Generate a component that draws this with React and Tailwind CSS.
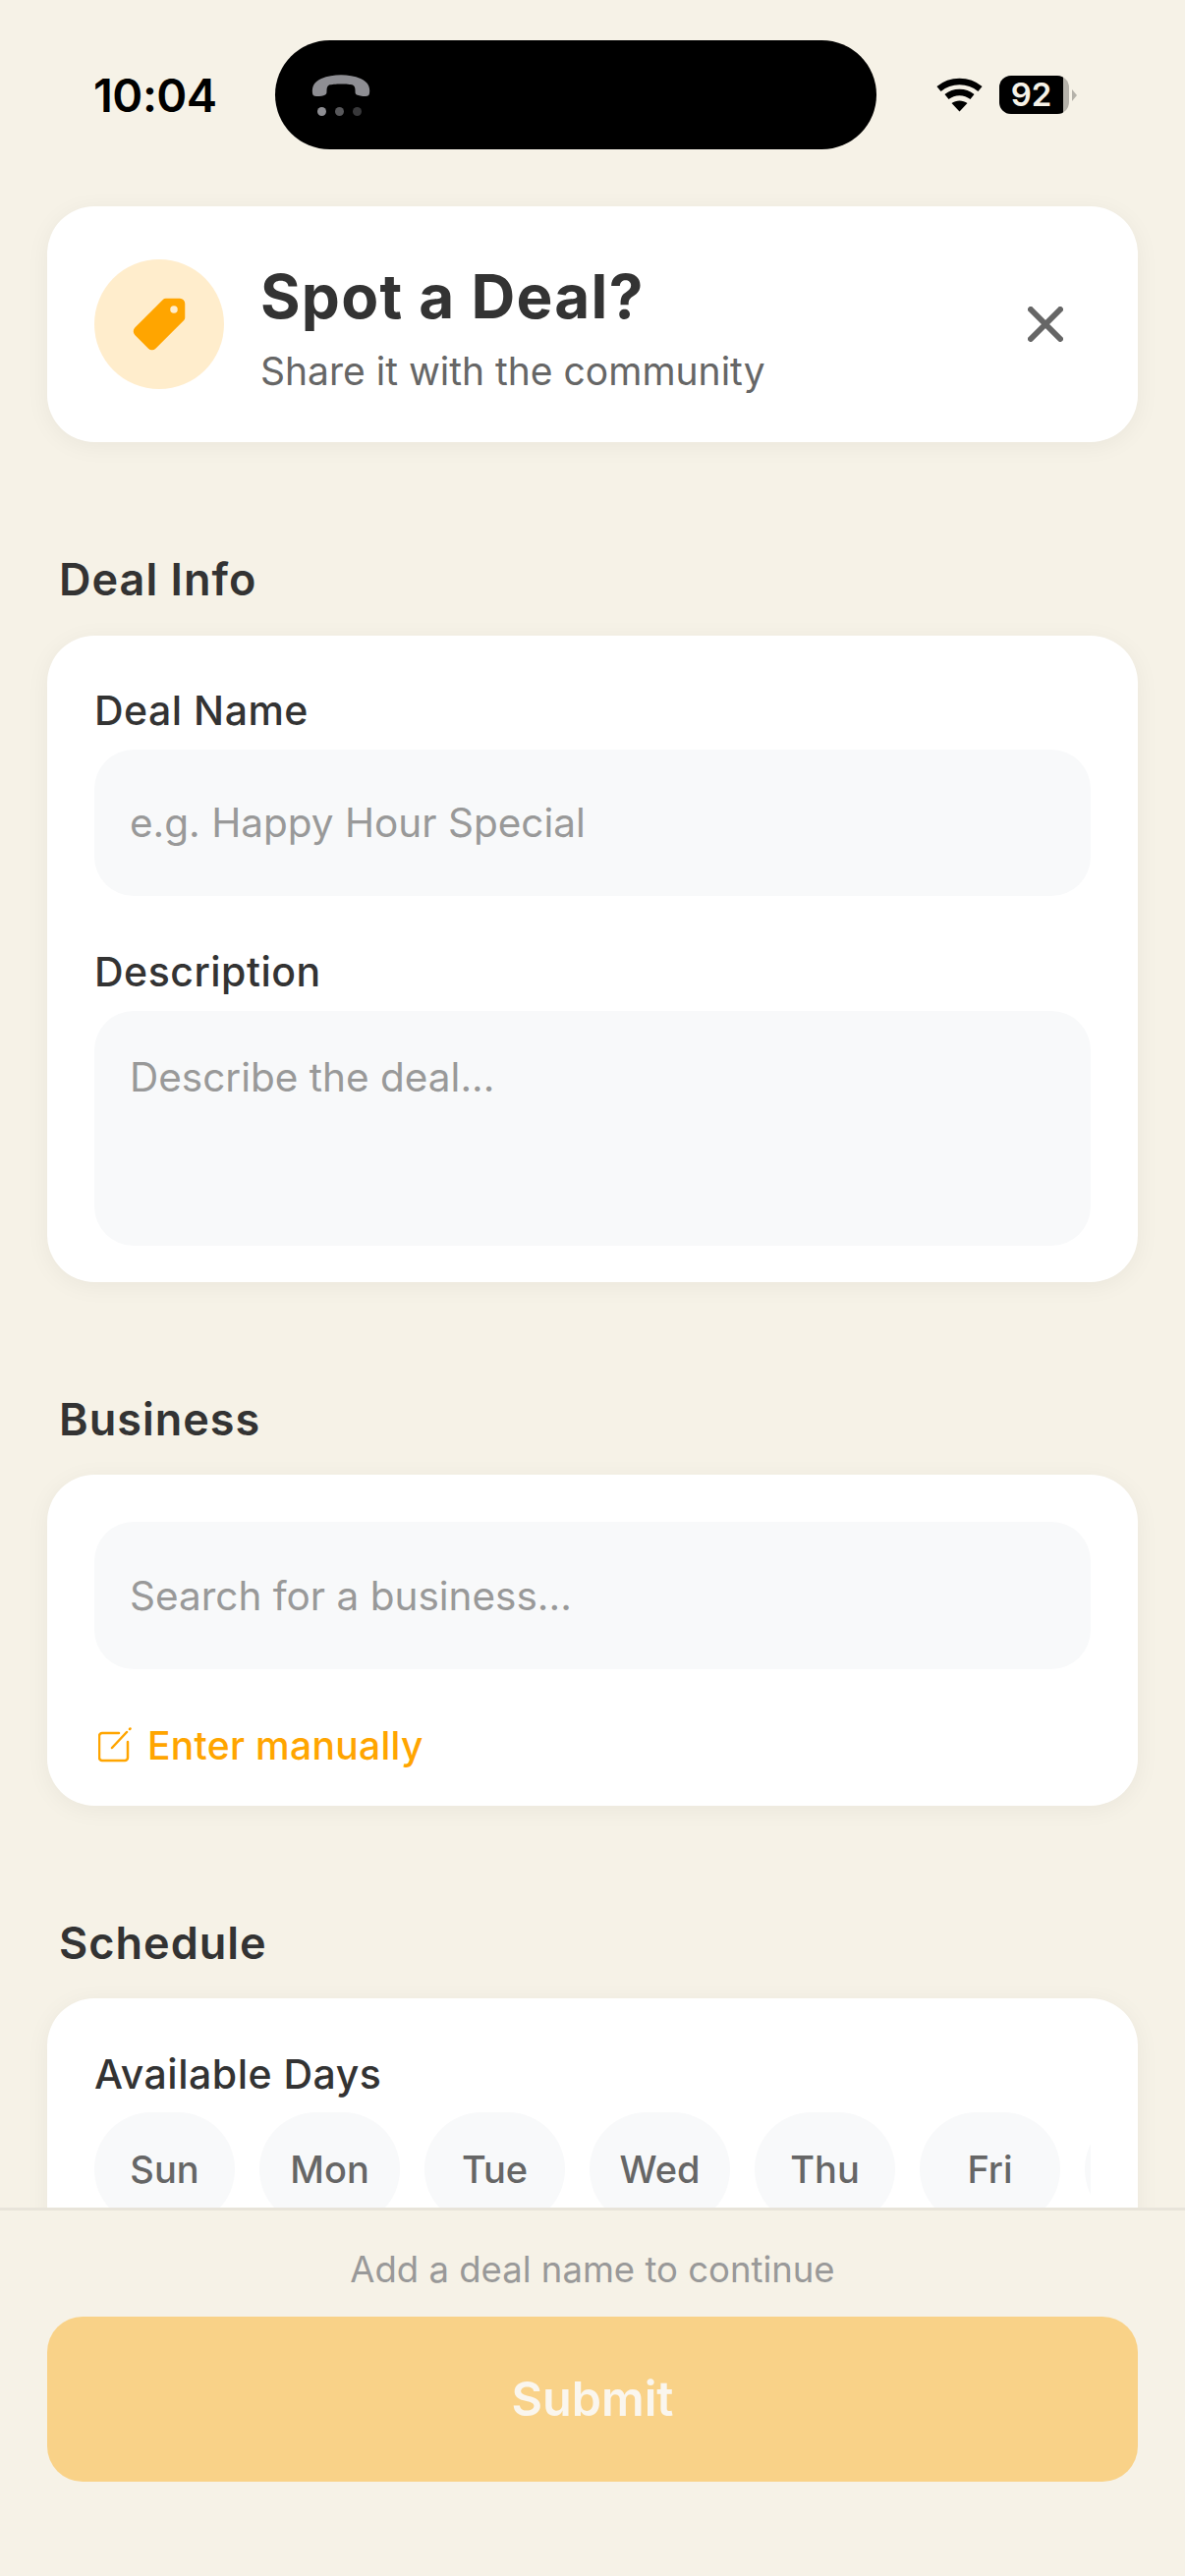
import React from "react";
import { IoPricetag } from "react-icons/io5";

const days = ["Sun", "Mon", "Tue", "Wed", "Thu", "Fri", "Sat"];

function StatusBar() {
  return (
    <div className="flex items-center pt-[41px] pl-[95px] text-black">
      <span className="w-[185px] font-[Inter] text-[47px] leading-none font-semibold tracking-[-0.5px]">10:04</span>
      <div className="flex h-[111px] w-[612px] flex-col items-start justify-center rounded-[56px] bg-black pl-[37px]">
        <svg width="60" height="24" viewBox="0 0 60 24" fill="#8e8e93">
          <path d="M1 20c-1-7 2-12 9-15 12-5 28-5 40 0 7 3 10 8 9 15-.2 2-1.500 3-4 3-4 0-7-.6-9-1.500-1.500-.8-1.500-2-1.500-4 0-3-.5-5-2.500-6-4-1.500-20-1.500-24 0-2 1-2.500 3-2.500 6 0 2 0 3.200-1.500 4-2 1-5 1.500-9 1.500-2.500 0-3.800-1-4-3z" />
        </svg>
        <div className="mt-[10px] ml-[6px] flex gap-[9px]">
          <span className="size-[9px] rounded-full bg-[#8e8e93]"></span>
          <span className="size-[9px] rounded-full bg-[#58585b]"></span>
          <span className="size-[9px] rounded-full bg-[#38383a]"></span>
        </div>
      </div>
      <svg className="ml-[61px]" width="47" height="35" viewBox="0 0 47 35" fill="none" stroke="#000" strokeWidth="6.500">
        <path d="M2.500 11.500c12-10 30-10 42 0" />
        <path d="M10.500 19.500c7.500-6 18.500-6 26 0" />
        <path d="M23.500 34.500l-8-8.500c4.500-3.500 11.500-3.500 16 0z" fill="#000" stroke="none" />
      </svg>
      <div className="ml-[17px] flex items-center">
        <div className="flex h-[39px] w-[71px] overflow-hidden rounded-[12px] bg-[#b5b2aa]">
          <div className="flex w-[65px] items-center justify-center bg-black font-[Inter] text-[33px] leading-none font-semibold text-[#f6f2e7]">92</div>
        </div>
        <svg className="ml-[3px]" width="5" height="12" viewBox="0 0 5 12" fill="#b5b2aa">
          <path d="M0 0l5 6-5 6z" />
        </svg>
      </div>
    </div>
  );
}

function Header() {
  return (
    <div className="mx-12 mt-[58px] flex h-[240px] items-center rounded-[48px] bg-white pr-[76px] pl-12 shadow-[0_4px_24px_rgba(0,0,0,0.05)]">
      <div className="flex size-[132px] items-center justify-center rounded-full bg-[#ffedcc]">
        <IoPricetag className="size-[60px] text-[#ffa500]" />
      </div>
      <div className="ml-[37px] flex-1 pt-[6px]">
        <h1 className="text-[62px] leading-[76px] font-bold tracking-[1.25px] text-[#333]">Spot a Deal?</h1>
        <p className="mt-[13px] text-[39px] leading-[50px] text-[#666]">Share it with the community</p>
      </div>
      <svg width="36" height="36" viewBox="0 0 36 36" fill="none" stroke="#666" strokeWidth="6" strokeLinecap="round">
        <path d="M3 3l30 30M33 3L3 33" />
      </svg>
    </div>
  );
}

function SectionTitle({ children, first }) {
  return (
    <h2 className={first ? "mx-[60px] mt-[110px] mb-[27px] text-[45px] leading-[60px] font-semibold tracking-[1px] text-[#333]" : "mx-[60px] mt-[110px] mb-[26px] text-[45px] leading-[60px] font-semibold tracking-[1px] text-[#333]"}>
      {children}
    </h2>
  );
}

function Label({ children }) {
  return <label className="mb-[10px] block text-[41px] leading-[60px] font-medium tracking-[0.5px] text-[#333]">{children}</label>;
}

export default function App() {
  return (
    <div className="flex h-[2622px] flex-col overflow-hidden bg-[#f6f2e7] font-[Inter,sans-serif]">
      <div className="min-h-0 flex-1 overflow-hidden">
        <StatusBar />
        <Header />

        <SectionTitle first>Deal Info</SectionTitle>
        <div className="mx-12 rounded-[48px] bg-white px-12 pt-[46px] pb-[37px] shadow-[0_4px_24px_rgba(0,0,0,0.05)]">
          <Label>Deal Name</Label>
          <input
            className="h-[149px] w-full rounded-[40px] bg-[#f8f9fa] px-9 text-[40.500px] outline-none placeholder:text-[#999]"
            placeholder="e.g. Happy Hour Special"
          />
          <div className="mt-[47px]">
            <Label>Description</Label>
            <textarea
              className="block h-[239px] w-full resize-none rounded-[40px] bg-[#f8f9fa] px-9 pt-[43px] text-[40.500px] leading-[50px] outline-none placeholder:text-[#999]"
              placeholder="Describe the deal..."
            />
          </div>
        </div>

        <SectionTitle>Business</SectionTitle>
        <div className="mx-12 rounded-[48px] bg-white px-12 pt-12 pb-8 shadow-[0_4px_24px_rgba(0,0,0,0.05)]">
          <input
            className="h-[150px] w-full rounded-[40px] bg-[#f8f9fa] px-9 text-[40.500px] outline-none placeholder:text-[#999]"
            placeholder="Search for a business..."
          />
          <div className="mt-[47px] flex h-[60px] items-center text-[#ffa500]">
            <svg className="ml-1" width="35" height="36" viewBox="0 0 35 36" fill="none" stroke="#ffa500" strokeWidth="2.500" strokeLinecap="round">
              <path d="M21 6H4a3 3 0 0 0-3 3v22a3 3 0 0 0 3 3h23a3 3 0 0 0 3-3V15" />
              <path d="M14 21L29 5M32.500 1.500l-.5.5" />
            </svg>
            <span className="ml-[15px] text-[39px] leading-none font-medium tracking-[0.3px]">Enter manually</span>
          </div>
        </div>

        <SectionTitle>Schedule</SectionTitle>
        <div className="mx-12 rounded-t-[48px] bg-white px-12 pt-[47px] pb-12 shadow-[0_4px_24px_rgba(0,0,0,0.05)]">
          <label className="block text-[41px] leading-[60px] font-medium tracking-[0.5px] text-[#333]">Available Days</label>
          <div className="mt-[9px] flex gap-[25px] overflow-hidden">
            {days.map((d) => (
              <div key={d} className="flex h-[116px] w-[143px] shrink-0 items-center justify-center rounded-full bg-[#f8f9fa] text-[38px] font-medium text-[#666]">
                {d}
              </div>
            ))}
          </div>
        </div>
      </div>

      <div className="h-[375px] border-t-[3px] border-[#e8e4da] bg-[#f6f2e7] px-12 pt-[38px]">
        <p className="text-center text-[36.500px] leading-[44px] text-[#999]">Add a deal name to continue</p>
        <button className="mt-[26px] flex h-[168px] w-full items-center justify-center rounded-[36px] bg-[#f9d288] text-[48.500px] font-semibold text-[#faf6ee]">
          Submit
        </button>
      </div>
    </div>
  );
}
